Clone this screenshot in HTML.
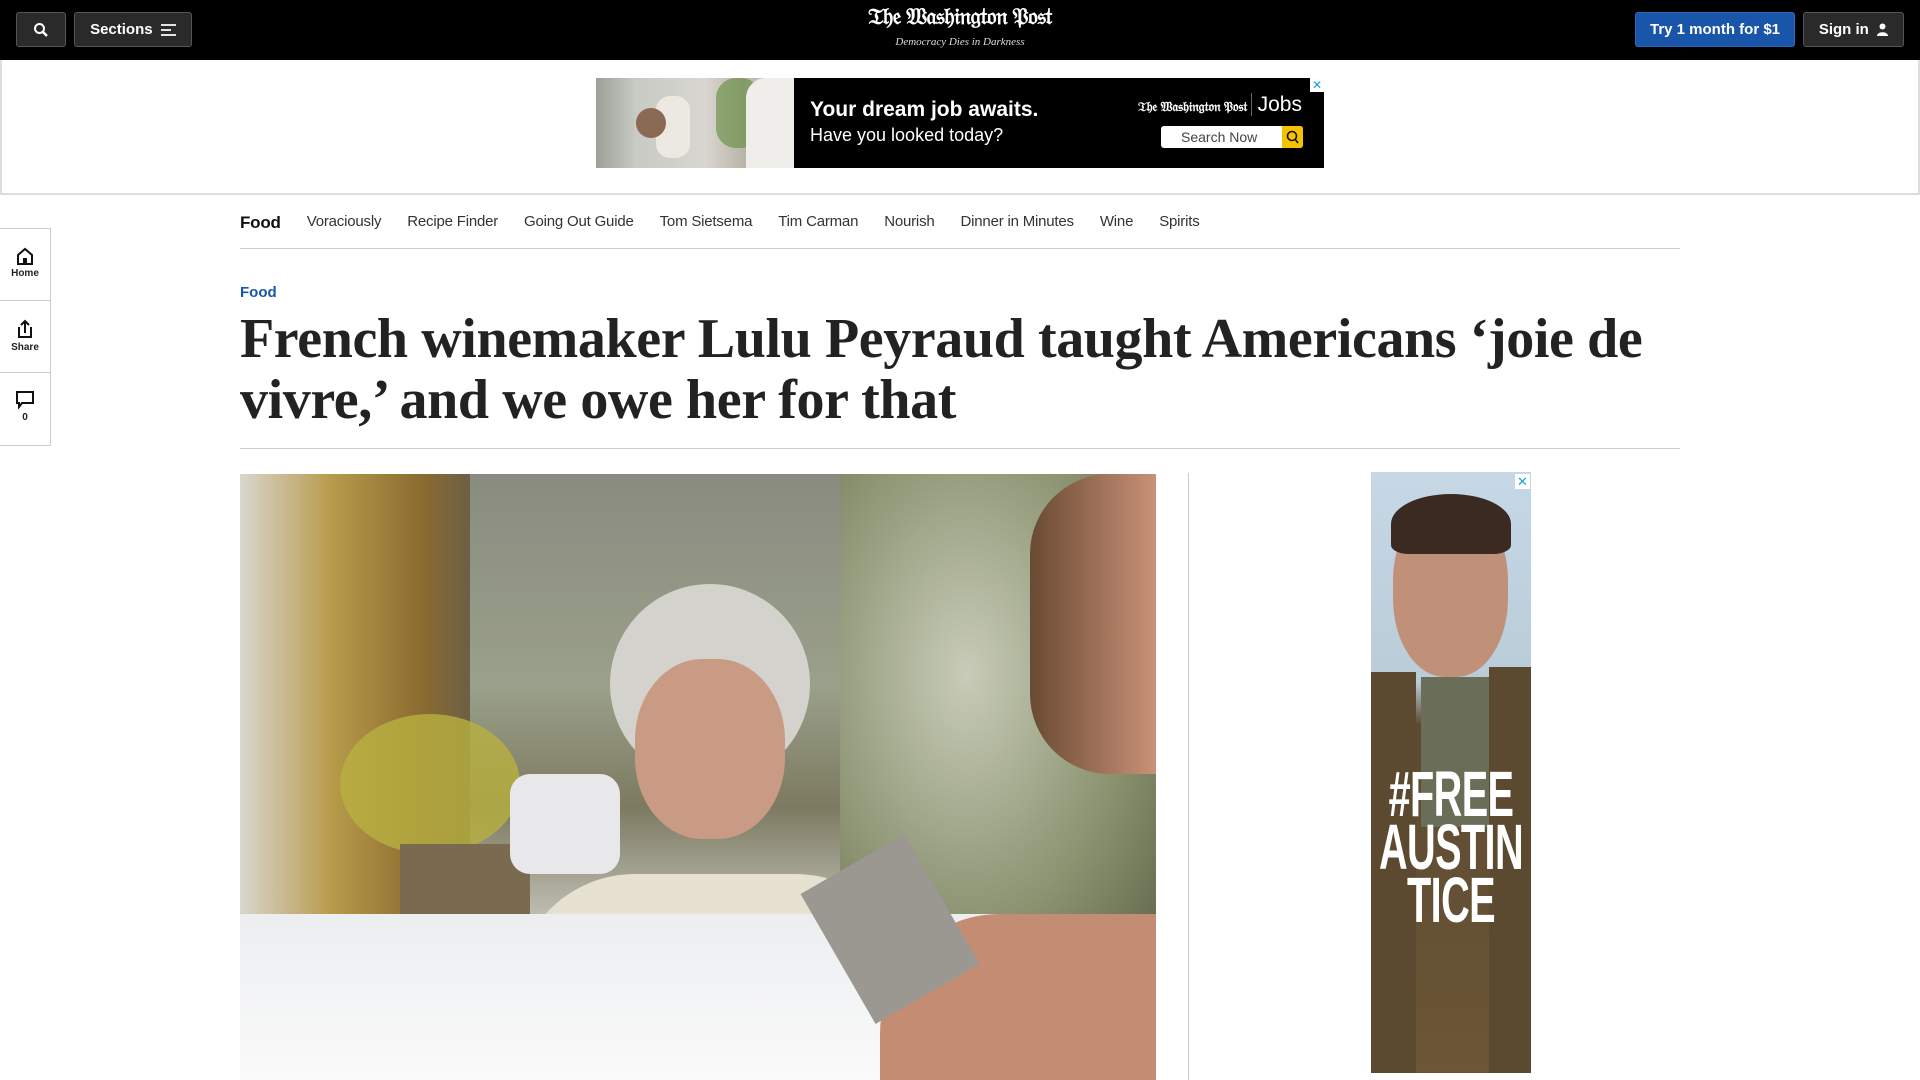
<!DOCTYPE html>
<html><head><meta charset="utf-8"><style>
*{margin:0;padding:0;box-sizing:border-box}
body{width:1920px;height:1080px;overflow:hidden;background:#fff;font-family:"Liberation Sans",sans-serif;color:#111;position:relative}
.abs{position:absolute}
.top{left:0;top:0;width:1920px;height:60px;background:#000}
.btn{position:absolute;top:12px;height:35px;border:1px solid #555;border-radius:3px;background:#2a2a2a;color:#fff;font-weight:bold;font-size:15px;display:flex;align-items:center;justify-content:center}
.logo{left:760px;width:400px;top:4px;text-align:center;color:#fff;font-family:"Liberation Serif",serif;font-weight:bold;font-size:23px;letter-spacing:-0.5px}
.tag{left:760px;width:400px;top:36px;text-align:center;color:#ddd;font-family:"Liberation Serif",serif;font-style:italic;font-size:11px}
.adband{left:0;top:60px;width:1920px;height:135px;border:2px solid #ddd;border-top:none}
.nav{top:213px;left:240px;display:flex;font-size:15px;color:#333;letter-spacing:-0.2px}
.nav span{margin-right:26px}
.rail{left:0;width:51px;border:1px solid #ccc;border-left:none;text-align:center;font-size:10px;font-weight:bold;color:#222}
.rail div{height:72px;border-bottom:1px solid #ccc;padding-top:18px}
.rail div:last-child{border-bottom:none}
h1{position:absolute;left:240px;top:309px;width:1450px;font-family:"Liberation Serif",serif;font-weight:bold;font-size:56px;line-height:61px;color:#222;letter-spacing:-0.4px}
</style></head><body>
<div class="abs top"></div>
<div class="btn" style="left:16px;width:50px"><svg width="16" height="16" viewBox="0 0 16 16"><circle cx="6.5" cy="6.5" r="4.5" stroke="#fff" stroke-width="2" fill="none"/><path d="M10 10l4 4" stroke="#fff" stroke-width="2.4"/></svg></div>
<div class="btn" style="left:74px;width:118px">Sections&nbsp;&nbsp;<svg width="15" height="12"><path d="M0 1h15M0 6h10M0 11h15" stroke="#fff" stroke-width="1.8"/></svg></div>
<div class="abs logo">𝔗𝔥𝔢 𝔚𝔞𝔰𝔥𝔦𝔫𝔤𝔱𝔬𝔫 𝔓𝔬𝔰𝔱</div>
<div class="abs tag">Democracy Dies in Darkness</div>
<div class="btn" style="left:1635px;width:160px;background:#1955a8;border-color:#2a66c0">Try 1 month for $1</div>
<div class="btn" style="left:1803px;width:101px">Sign in&nbsp;&nbsp;<svg width="11" height="13"><circle cx="5.5" cy="3.5" r="3" fill="#fff"/><path d="M0 13c0-5 11-5 11 0z" fill="#fff"/></svg></div>

<div class="abs adband"></div>
<div class="abs" style="left:596px;top:78px;width:728px;height:90px;background:#000;overflow:hidden">
 <div class="abs" style="left:0;top:0;width:198px;height:90px;background:linear-gradient(90deg,#9c9e98,#c8cac4 20%,#d8d6d0 55%,#b9b4a8 75%,#e6e2da)"></div>
 <div class="abs" style="left:60px;top:18px;width:34px;height:62px;border-radius:14px;background:#ece8e2"></div>
 <div class="abs" style="left:40px;top:30px;width:30px;height:30px;border-radius:50%;background:#8a6a52"></div>
 <div class="abs" style="left:120px;top:0;width:45px;height:70px;background:#5f8a3a;opacity:.6;border-radius:20px"></div>
 <div class="abs" style="left:150px;top:0;width:48px;height:90px;background:#f0eeea;border-radius:20px 0 0 0"></div>
 <div class="abs" style="left:214px;top:20px;color:#fff;font-weight:bold;font-size:21px">Your dream job awaits.</div>
 <div class="abs" style="left:214px;top:47px;color:#fff;font-size:18px">Have you looked today?</div>
 <div class="abs" style="left:542px;top:15px;color:#fff;font-family:'Liberation Serif',serif;font-weight:bold;font-size:13px">𝔗𝔥𝔢 𝔚𝔞𝔰𝔥𝔦𝔫𝔤𝔱𝔬𝔫 𝔓𝔬𝔰𝔱 <span style="font-family:'Liberation Sans';font-weight:normal;font-size:21px;border-left:1px solid #666;padding-left:6px">Jobs</span></div>
 <div class="abs" style="left:565px;top:48px;width:142px;height:22px;background:#fff;border-radius:3px;font-size:14px;color:#444;padding:3px 0 0 20px">Search Now</div>
 <div class="abs" style="left:686px;top:48px;width:21px;height:22px;background:#f4c300;border-radius:0 3px 3px 0"><svg width="21" height="22"><circle cx="10" cy="10" r="4.5" stroke="#111" stroke-width="1.6" fill="none"/><path d="M13 13l3 4" stroke="#111" stroke-width="1.6"/></svg></div>
 <div class="abs" style="left:714px;top:0;width:14px;height:14px;background:#fff;color:#1aa0d8;font-size:12px;text-align:center;line-height:14px">✕</div>
</div>

<div class="abs nav"><span style="font-weight:bold;color:#111;font-size:17px">Food</span><span>Voraciously</span><span>Recipe Finder</span><span>Going Out Guide</span><span>Tom Sietsema</span><span>Tim Carman</span><span>Nourish</span><span>Dinner in Minutes</span><span>Wine</span><span>Spirits</span></div>
<div class="abs" style="left:240px;top:248px;width:1440px;height:1px;background:#ccc"></div>

<div class="abs rail" style="top:228px">
 <div><svg width="20" height="18" viewBox="0 0 20 18"><path d="M3 8L10 2l7 6v9H3z" fill="none" stroke="#111" stroke-width="2"/><rect x="8" y="11" width="4" height="6" fill="#111"/></svg><br>Home</div>
 <div><svg width="16" height="20" viewBox="0 0 16 20"><path d="M2 8v10h12V8M8 14V2M4 6l4-4 4 4" fill="none" stroke="#111" stroke-width="2"/></svg><br>Share</div>
 <div><svg width="18" height="18" viewBox="0 0 18 18"><path d="M1 1h16v11H6l-3 4v-4H1z" fill="none" stroke="#111" stroke-width="2"/></svg><br>0</div>
</div>

<div class="abs" style="left:240px;top:284px;color:#1955a8;font-weight:bold;font-size:15px">Food</div>
<h1>French winemaker Lulu Peyraud taught Americans ‘joie de vivre,’ and we owe her for that</h1>
<div class="abs" style="left:240px;top:448px;width:1440px;height:1px;background:#ccc"></div>

<div class="abs" style="left:240px;top:474px;width:916px;height:606px;overflow:hidden;background:linear-gradient(180deg,#8a8b80 0%,#9aa08a 35%,#7c7a60 55%,#d8d8d4 80%,#f2f2f4 100%)">
 <div class="abs" style="left:0;top:0;width:230px;height:606px;background:linear-gradient(90deg,#d9d6d0,#b89a4a 40%,#8a6a30 80%,#6d5f45)"></div>
 <div class="abs" style="left:100px;top:240px;width:180px;height:140px;border-radius:50%;background:#b8b040;opacity:.8"></div>
 <div class="abs" style="left:160px;top:370px;width:130px;height:200px;background:#7a6a50"></div>
 <div class="abs" style="left:600px;top:0;width:316px;height:500px;background:radial-gradient(ellipse at 40% 40%,#c8ccb8,#8a9270 60%,#5d6548)"></div>
 <div class="abs" style="left:270px;top:300px;width:110px;height:100px;background:#e8e8ea;border-radius:20px"></div>
 <div class="abs" style="left:370px;top:110px;width:200px;height:200px;border-radius:50%;background:#d4d2cc"></div>
 <div class="abs" style="left:395px;top:185px;width:150px;height:180px;border-radius:45%;background:#c99a84"></div>
 <div class="abs" style="left:275px;top:400px;width:400px;height:330px;border-radius:120px 120px 0 0;background:#e6e1d1"></div>
 <div class="abs" style="left:0;top:440px;width:916px;height:166px;background:linear-gradient(180deg,#eceef0,#fafafa)"></div>
 <div class="abs" style="left:790px;top:0;width:126px;height:300px;background:linear-gradient(90deg,#6a4a32,#c89278);border-radius:80px 0 0 80px"></div>
 <div class="abs" style="left:640px;top:440px;width:276px;height:200px;border-radius:120px 0 0 0;background:#c58c74"></div>
 <div class="abs" style="left:590px;top:380px;width:120px;height:150px;transform:rotate(-30deg);background:#9a9890"></div>
</div>

<div class="abs" style="left:1188px;top:473px;width:1px;height:607px;background:#ccc"></div>

<div class="abs" style="left:1371px;top:472px;width:160px;height:601px;overflow:hidden;background:linear-gradient(180deg,#c6d8e6 0%,#b9ccd8 35%,#5d4a32 42%,#6b5636 100%)">
 <div class="abs" style="left:22px;top:30px;width:115px;height:175px;border-radius:45%;background:#c09078"></div>
 <div class="abs" style="left:20px;top:22px;width:120px;height:60px;border-radius:50% 50% 15% 15%;background:#3a2a22"></div>
 <div class="abs" style="left:50px;top:205px;width:70px;height:150px;background:#6a6e58"></div>
 <div class="abs" style="left:0;top:200px;width:45px;height:401px;background:#5c4a30"></div>
 <div class="abs" style="left:118px;top:195px;width:42px;height:406px;background:#5c4a30"></div>
 <div class="abs" style="left:-40px;top:296px;width:240px;text-align:center;color:#fff;font-weight:bold;font-size:64px;line-height:53px;letter-spacing:-1px;transform:scaleX(0.62)">#FREE<br>AUSTIN<br>TICE</div>
 <div class="abs" style="left:144px;top:2px;width:15px;height:15px;background:#fff;color:#1aa0d8;font-size:13px;text-align:center;line-height:15px">✕</div>
</div>
</body></html>
